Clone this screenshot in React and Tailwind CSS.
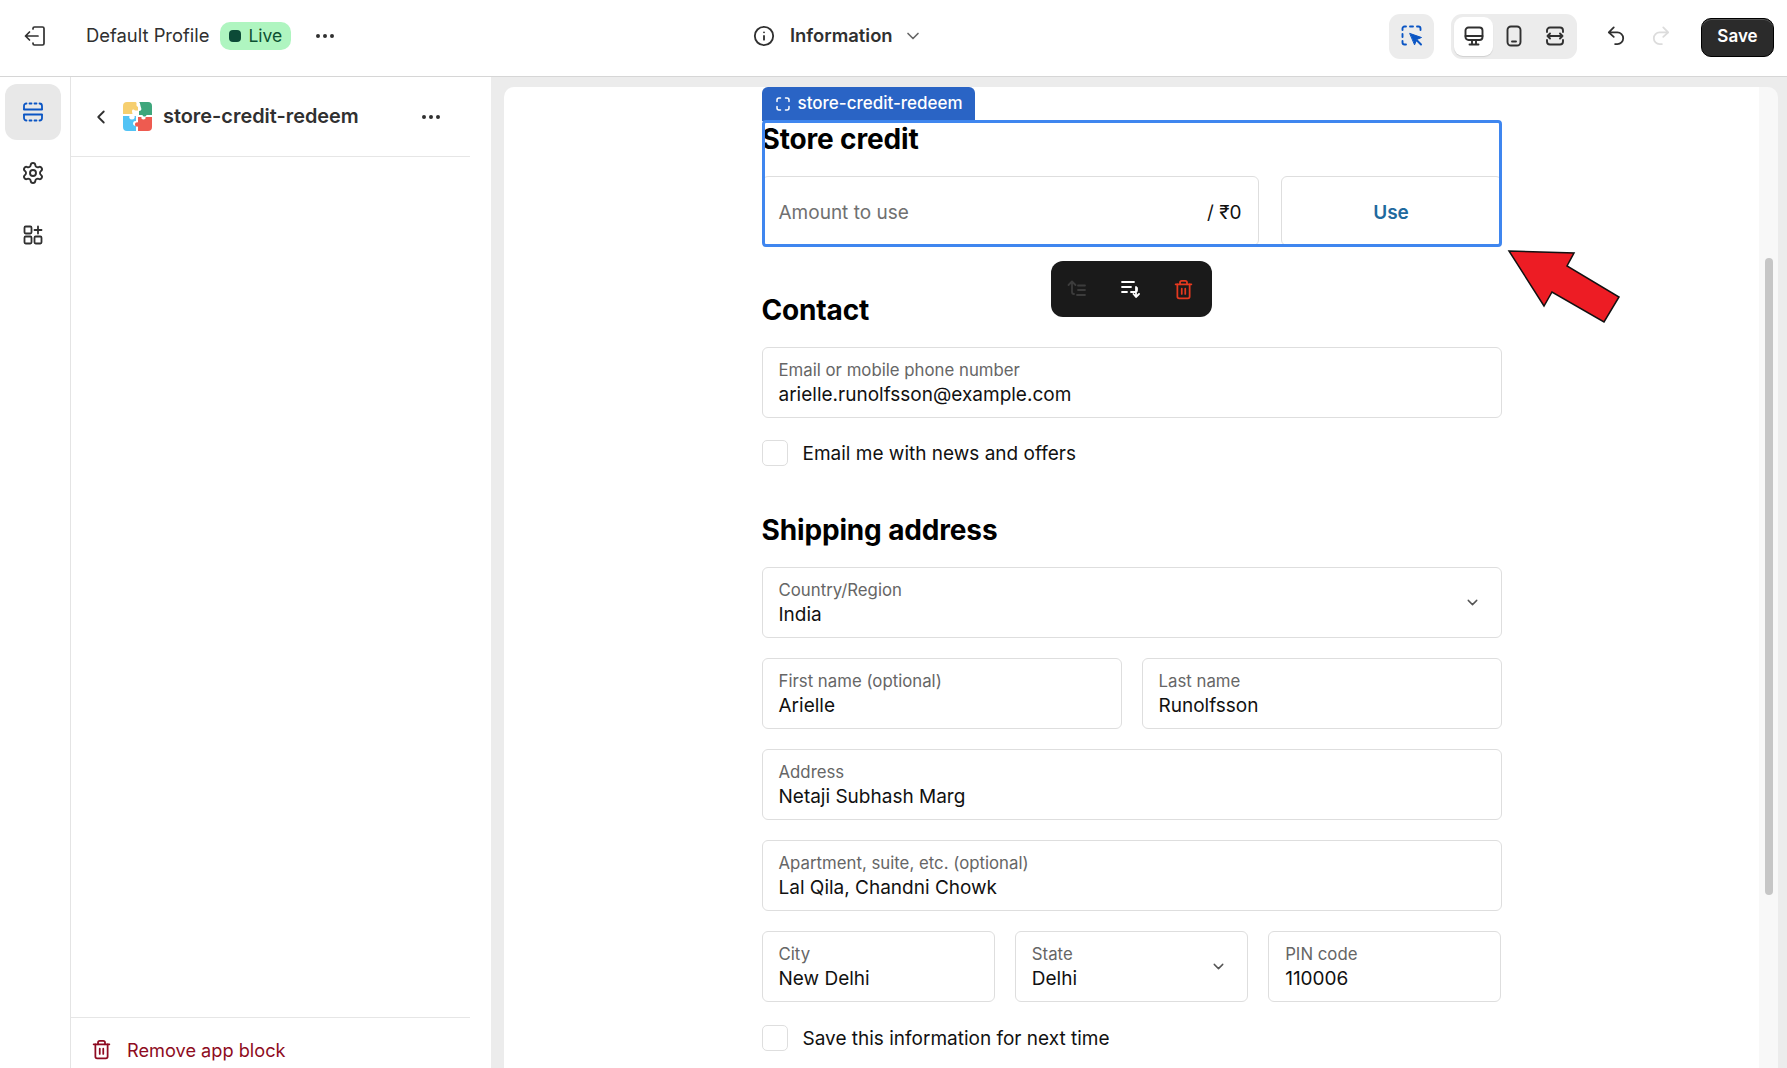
import { ChevronDown, ChevronLeft, Info, Ellipsis, Settings, Trash2 } from "lucide-react";

function ExitIcon() {
    return (
        <svg width="24" height="24" viewBox="0 0 24 24" fill="none" stroke="#303030" strokeWidth="1.7" strokeLinecap="round" strokeLinejoin="round">
            <path d="M10 5V4.500A1.500 1.500 0 0 1 11.500 3h8A1.500 1.500 0 0 1 21 4.500v15a1.500 1.500 0 0 1-1.500 1.500h-8A1.500 1.500 0 0 1 10 19.500V19" />
            <path d="M15 12H2.500M6.500 8l-4 4 4 4" />
        </svg>
    );
}

function SectionsIcon() {
    return (
        <svg width="20" height="20" viewBox="0 0 20 20" fill="none" stroke="#0a55c4" strokeWidth="1.800" strokeLinecap="round">
            <path d="M1 7V4a2.500 2.500 0 0 1 2.500-2.500M6.500 1.500h2M11.500 1.500h2M16.500 1.500A2.500 2.500 0 0 1 19 4v3" />
            <path d="M1 7.500h18M1 12.500h18" />
            <path d="M1 13v3a2.500 2.500 0 0 0 2.500 2.500M6.500 18.500h2M11.500 18.500h2M16.500 18.500A2.500 2.500 0 0 0 19 16v-3" />
        </svg>
    );
}

function AddBlocksIcon() {
    return (
        <svg width="20" height="20" viewBox="0 0 20 20" fill="none" stroke="#303030" strokeWidth="1.800" strokeLinecap="round" strokeLinejoin="round">
            <rect x="1.500" y="1.500" width="7" height="7" rx="1.200" />
            <rect x="1.500" y="11.500" width="7" height="7" rx="1.200" />
            <rect x="11.500" y="11.500" width="7" height="7" rx="1.200" />
            <path d="M15 1.500v7M11.500 5h7" />
        </svg>
    );
}

function PuzzleLogo() {
    return (
        <svg width="29" height="29" viewBox="0 0 29 29">
            <rect width="29" height="29" rx="4" fill="#fff" />
            <path d="M4 0h8.500c1 0 1.200 1 1 2-.4 1.500 .5 2.500 1.500 3v3.500h-3c-1.500-1.500-3-1-3 .8 0 1.200 .5 2.200 .5 2.700H0V4a4 4 0 0 1 4-4z" fill="#f6cf6f" />
            <path d="M16 0h9a4 4 0 0 1 4 4v9h-5.500c-.5 2-3.500 2-4 0H16V9c2 0 3-1.500 2-3.500C17.400 4 17 0 16 0z" fill="#3ea67c" />
            <path d="M0 14h6.500c-.8 1.500 0 3.500 2.500 3.500s3-2 2.500-3.500H13v5c-2-.5-3 1-3 2.500s1.500 2.800 3 2.500v5H4a4 4 0 0 1-4-4z" fill="#52c3f5" />
            <path d="M15 15h3.500c-.5 1.500 .3 2.500 2 2.500s2.500-1 2-2.500H29v10a4 4 0 0 1-4 4H15v-4.500c-1.500 .5-3-.3-3-2s1.500-2.500 3-2z" fill="#ee5b50" />
        </svg>
    );
}

function SelectIcon() {
    return (
        <svg width="22" height="22" viewBox="0 0 22 22" fill="none" strokeLinecap="round">
            <path d="M1.500 5V3.500a2 2 0 0 1 2-2H5M9 1.500h3M16 1.500h1.500a2 2 0 0 1 2 2V5M1.500 9v3M1.500 16v1.500a2 2 0 0 0 2 2H5" stroke="#0a55c4" strokeWidth="1.900" />
            <path d="M9 8.500l11.500 4-4.800 2-2 5z" fill="#0a55c4" stroke="#0a55c4" strokeWidth="1" strokeLinejoin="round" />
            <path d="M16 15.500l4 4" stroke="#0a55c4" strokeWidth="2" />
        </svg>
    );
}

function DesktopIcon() {
    return (
        <svg width="20" height="20" viewBox="0 0 20 20" fill="none" stroke="#303030" strokeWidth="1.900" strokeLinecap="round" strokeLinejoin="round">
            <rect x="1.500" y="1.500" width="17" height="12.500" rx="3" />
            <path d="M1.500 10h17M8 14v4M12 14v4M5.500 18.500h9" />
        </svg>
    );
}

function PhoneIcon() {
    return (
        <svg width="16" height="22" viewBox="0 0 16 22" fill="none" stroke="#303030" strokeWidth="1.900" strokeLinecap="round" strokeLinejoin="round">
            <rect x="1.500" y="1.500" width="13" height="19" rx="3.500" />
            <path d="M6 16.500h4" />
        </svg>
    );
}

function FullWidthIcon() {
    return (
        <svg width="20" height="20" viewBox="0 0 20 20" fill="none" stroke="#303030" strokeWidth="1.900" strokeLinecap="round" strokeLinejoin="round">
            <path d="M2 6V4.500a3 3 0 0 1 3-3h10a3 3 0 0 1 3 3V6M2 14v1.500a3 3 0 0 0 3 3h10a3 3 0 0 0 3-3V14" />
            <path d="M2.500 10h15M5 7.500L2.500 10 5 12.500M15 7.500l2.500 2.500-2.500 2.500" />
        </svg>
    );
}

function UndoIcon({ color }) {
    return (
        <svg width="18" height="20" viewBox="0 0 20 22" fill="none" stroke={color} strokeWidth="2" strokeLinecap="round" strokeLinejoin="round">
            <path d="M7.500 1.500L2 7l5.500 5M2 7h9.500a6.500 6.500 0 0 1 0 13H9" />
        </svg>
    );
}

function TabIcon() {
    return (
        <svg width="14" height="14" viewBox="0 0 14 14" fill="none" stroke="#ffffff" strokeWidth="1.500" strokeLinecap="round">
            <path d="M1 4.500V3a2 2 0 0 1 2-2h1.500M9.500 1H11a2 2 0 0 1 2 2v1.500M13 9.500V11a2 2 0 0 1-2 2H9.500M4.500 13H3a2 2 0 0 1-2-2V9.500" />
        </svg>
    );
}

function MoveUpIcon() {
    return (
        <svg width="20" height="20" viewBox="0 0 20 20" fill="none" stroke="#3c3c3c" strokeWidth="1.800" strokeLinecap="round" strokeLinejoin="round">
            <path d="M1.500 6L5 2.500 8.500 6M5 3v10a2 2 0 0 0 2 2h0M11 6.500h7M11 11h7M10 16h8" />
        </svg>
    );
}

function MoveDownIcon() {
    return (
        <svg width="20" height="20" viewBox="0 0 20 20" fill="none" stroke="#ffffff" strokeWidth="1.800" strokeLinecap="round" strokeLinejoin="round">
            <path d="M2 3h12M2 8h9M2 13h5M11 13h4a2 2 0 0 0 2-2V9M13.500 15L16 18l3-3M16 8v9.500" />
        </svg>
    );
}

function Field({ label, value, chevron, className }) {
    return (
        <div className={`relative flex h-[71px] flex-col justify-center rounded-[6px] border-[1.500px] border-[#dedede] px-4 pt-[2px] ${className || ""}`}>
            <div className="pb-[1px] text-[16.800px] leading-[22px] text-[#666666]">{label}</div>
            <div className="text-[19px] leading-[26px] text-[#111111]">{value}</div>
            {chevron && <ChevronDown className="absolute right-[20px] top-[26px] h-[17px] w-[17px] text-[#555555]" />}
        </div>
    );
}

function CheckRow({ text, className }) {
    return (
        <div className={`flex h-[26px] items-center gap-[15px] ${className}`}>
            <div className="h-[26px] w-[26px] rounded-[5px] border-[1.500px] border-[#dedede]" />
            <span className="h-[26px] text-[19px] leading-[27px] text-[#111111]">{text}</span>
        </div>
    );
}

function Heading({ children, className }) {
    return <h2 className={`text-[28px] font-bold leading-[34px] tracking-[-0.15px] text-black ${className}`}>{children}</h2>;
}

export default function App() {
    return (
        <div className="flex h-[1068px] w-[1787px] flex-col overflow-hidden bg-[#ececec] font-['Inter',sans-serif] text-[#303030]">
            <header className="flex h-[77px] shrink-0 items-center border-b border-[#d6d6d6] bg-white pb-[4px]">
                <div className="flex w-[604px] items-center pl-[23px]">
                    <ExitIcon />
                    <span className="ml-[39px] text-[18.400px] text-[#303030]">Default Profile</span>
                    <span className="ml-[11px] flex h-[28px] w-[71px] items-center rounded-[10px] bg-[#aff5c0] pl-[9px] text-[17.500px] text-[#0c5132]">
                        <span className="mr-[7px] h-[12px] w-[12px] rounded-[4px] bg-[#0c4a37]" />
                        Live
                    </span>
                    <Ellipsis className="ml-[22px] h-[24px] w-[24px] text-[#303030]" />
                </div>
                <div className="ml-[149px] flex items-center">
                    <Info className="h-[22px] w-[22px] text-[#303030]" />
                    <span className="ml-[15px] text-[18.400px] font-semibold text-[#303030]">Information</span>
                    <ChevronDown className="ml-[10px] h-[20px] w-[20px] text-[#666666]" />
                </div>
                <div className="ml-auto flex items-center pr-[13px]">
                    <div className="flex h-[45px] w-[45px] items-center justify-center rounded-[11px] bg-[#ececec]">
                        <SelectIcon />
                    </div>
                    <div className="ml-[17px] flex h-[45px] w-[126px] items-center rounded-[11px] bg-[#ececec] px-[3px]">
                        <div className="flex h-[39px] w-[39px] items-center justify-center rounded-[9px] bg-white shadow-[0_1px_1px_rgba(0,0,0,0.12)]">
                            <DesktopIcon />
                        </div>
                        <div className="flex h-[39px] w-[42px] items-center justify-center">
                            <PhoneIcon />
                        </div>
                        <div className="flex h-[39px] w-[39px] items-center justify-center">
                            <FullWidthIcon />
                        </div>
                    </div>
                    <span className="ml-[30px]"><UndoIcon color="#303030" /></span>
                    <span className="ml-[27px] -scale-x-100"><UndoIcon color="#dcdcdc" /></span>
                    <button className="ml-[31px] mt-[2px] h-[39px] w-[73px] rounded-[10px] border border-black bg-[#2b2b2b] text-[17px] font-semibold text-white shadow-[inset_0_1px_0_rgba(255,255,255,0.2)]">
                        Save
                    </button>
                </div>
            </header>

            <div className="flex min-h-0 flex-1">
                <nav className="flex w-[71px] shrink-0 flex-col items-center border-r border-[#e4e4e4] bg-white pl-[5px] pr-[9px] pt-[7px]">
                    <div className="flex h-[56px] w-[56px] shrink-0 items-center justify-center rounded-[12px] bg-[#e8e8e8]">
                        <SectionsIcon />
                    </div>
                    <div className="mt-[21px]">
                        <Settings className="h-[24px] w-[24px] text-[#303030]" strokeWidth={1.900} />
                    </div>
                    <div className="mt-[40px]">
                        <AddBlocksIcon />
                    </div>
                </nav>

                <aside className="flex w-[420px] shrink-0 flex-col bg-white pr-[21px]">
                    <div className="flex h-[80px] shrink-0 items-center border-b border-[#e6e6e6] pl-[19px]">
                        <ChevronLeft className="h-[22px] w-[22px] text-[#303030]" />
                        <span className="ml-[11px]"><PuzzleLogo /></span>
                        <span className="ml-[11px] text-[19.900px] font-semibold text-[#303030]">store-credit-redeem</span>
                        <Ellipsis className="ml-[60px] h-[24px] w-[24px] text-[#303030]" />
                    </div>
                    <div className="flex-1" />
                    <div className="flex h-[51px] shrink-0 items-start border-t border-[#e6e6e6] pl-[20px] pt-[19px] text-[#8e0b21]">
                        <Trash2 className="mt-[2px] h-[21px] w-[21px]" strokeWidth={2} />
                        <span className="ml-[15px] text-[18.200px]">Remove app block</span>
                    </div>
                </aside>

                <main className="flex min-w-0 flex-1 pl-[13px] pt-[10px]">
                    <div className="relative h-full w-[1255px] shrink-0 overflow-hidden rounded-tl-[10px] bg-white">
                        <div className="relative mx-auto w-[740px] pl-0 pt-[33px]">
                            <div className="absolute left-0 top-0 flex h-[34px] w-[213px] items-center rounded-t-[6px] bg-[#2a64c5] pl-[14px] text-[17px] font-medium text-white">
                                <span className="mr-[8px]"><TabIcon /></span>
                                store-credit-redeem
                            </div>
                            <div className="pointer-events-none absolute left-0 top-[33px] z-10 h-[127px] w-full rounded-[4px] border-[3px] border-[#3f86ef]" />

                            <Heading className="pt-[2px]">Store credit</Heading>
                            <div className="mt-[20px] flex gap-[22px]">
                                <div className="flex h-[70px] flex-1 items-center justify-between rounded-[6px] border-[1.500px] border-[#dedede] px-4 pt-[5px] text-[19px]">
                                    <span className="text-[#707070]">Amount to use</span>
                                    <span className="text-[#111111]">/ ₹0</span>
                                </div>
                                <div className="flex h-[70px] w-[221px] items-center justify-center rounded-[6px] border-[1.500px] border-[#dedede] pt-[5px] text-[19px] font-semibold text-[#1f6a9e]">
                                    Use
                                </div>
                            </div>

                            <Heading className="mt-[47px]">Contact</Heading>
                            <Field className="mt-[20px]" label="Email or mobile phone number" value="arielle.runolfsson@example.com" />
                            <CheckRow className="mt-[22px]" text="Email me with news and offers" />

                            <Heading className="mt-[47px]">Shipping address</Heading>
                            <Field className="mt-[20px]" label="Country/Region" value="India" chevron />
                            <div className="mt-[20px] flex gap-[20px]">
                                <Field className="flex-1" label="First name (optional)" value="Arielle" />
                                <Field className="flex-1" label="Last name" value="Runolfsson" />
                            </div>
                            <Field className="mt-[20px]" label="Address" value="Netaji Subhash Marg" />
                            <Field className="mt-[20px]" label="Apartment, suite, etc. (optional)" value="Lal Qila, Chandni Chowk" />
                            <div className="mt-[20px] flex gap-[20px]">
                                <Field className="flex-1" label="City" value="New Delhi" />
                                <Field className="flex-1" label="State" value="Delhi" chevron />
                                <Field className="flex-1" label="PIN code" value="110006" />
                            </div>
                            <CheckRow className="mt-[23px]" text="Save this information for next time" />

                            <div className="absolute left-[289px] top-[174px] z-20 flex h-[56px] w-[161px] items-center justify-between rounded-[12px] bg-[#1a1a1a] pl-[16px] pr-[18px]">
                                <MoveUpIcon />
                                <MoveDownIcon />
                                <Trash2 className="h-[21px] w-[21px] text-[#e5391f]" strokeWidth={2} />
                            </div>
                        </div>

                        <svg className="absolute left-[1000px] top-[155px] z-20" width="125" height="90" viewBox="0 0 125 90">
                            <polygon points="5,9 70,11 63,24 115,55 100,80 48,50 40,64" fill="#ed1c24" stroke="#111111" strokeWidth="1.500" />
                        </svg>
                    </div>
                    <div className="h-full w-[19px] shrink-0 rounded-tr-[10px] bg-[#f8f8f8] pt-[171px]">
                        <div className="ml-[6px] h-[637px] w-[8px] rounded-full bg-[#c6c6c6]" />
                    </div>
                </main>
            </div>
        </div>
    );
}
